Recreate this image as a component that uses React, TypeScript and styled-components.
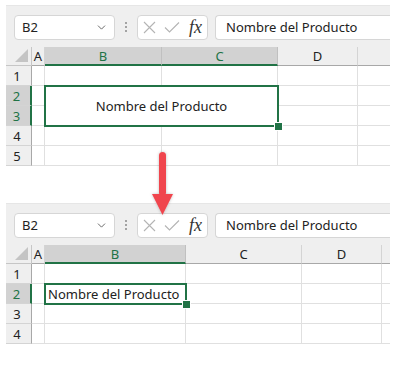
import React from "react";
import styled, { createGlobalStyle } from "styled-components";
import { ChevronDown } from "lucide-react";

const GREEN = "#217346";

const GlobalStyle = createGlobalStyle`
  html, body {
    margin: 0;
    padding: 0;
    background: #fff;
  }
  * {
    box-sizing: border-box;
  }
`;

const StyledPage = styled.div`
  position: relative;
  width: 395px;
  height: 370px;
  padding: 5px 0 0 6px;
  font-family: "Noto Sans", "Open Sans", sans-serif;
  overflow: hidden;
`;

const StyledShot = styled.section`
  width: 384px;
  overflow: hidden;
`;

const StyledSpacer = styled.div`
  height: 37px;
`;

const StyledToolbar = styled.div`
  display: flex;
  align-items: center;
  height: 42px;
  padding: 1px 0 0 8px;
  background-color: #efefef;
  border-top: 1px solid #e6e6e6;
`;

const StyledNameBox = styled.div`
  flex: none;
  display: flex;
  align-items: center;
  justify-content: space-between;
  width: 101px;
  height: 25px;
  padding: 0 6px 0 7px;
  background: #fff;
  border: 1px solid #d6d6d6;
  border-radius: 4px;
  font-size: 13px;
  color: #222;
`;

const StyledDots = styled.div`
  flex: none;
  width: 22px;
  display: flex;
  flex-direction: column;
  align-items: center;
  gap: 2px;
  & > span {
    width: 2px;
    height: 2px;
    border-radius: 1px;
    background: #8a8a8a;
  }
`;

const StyledFxBox = styled.div`
  flex: none;
  display: flex;
  align-items: center;
  width: 71px;
  height: 25px;
  padding: 0 4px 0 5px;
  background: #fff;
  border: 1px solid #d6d6d6;
  border-radius: 4px;
  gap: 8px;
`;

const StyledFx = styled.span`
  font-family: "Liberation Serif", "DejaVu Serif", serif;
  font-style: italic;
  font-size: 18px;
  color: #333;
  margin-left: 1px;
`;

const StyledFormula = styled.div`
  flex: none;
  display: flex;
  align-items: center;
  width: 200px;
  height: 25px;
  margin-left: 7px;
  padding-left: 10px;
  background: #fff;
  border: 1px solid #d6d6d6;
  border-right: none;
  border-radius: 4px 0 0 4px;
  font-size: 13px;
  color: #222;
  white-space: nowrap;
`;

const StyledGrid = styled.div<{ $cols: string; $rows: number }>`
  display: grid;
  grid-template-columns: ${(p) => p.$cols};
  grid-template-rows: 19px repeat(${(p) => p.$rows}, 20px);
  font-size: 13px;
  color: #222;
`;

const StyledCorner = styled.div`
  position: relative;
  background: #efefef;
  border-right: 1px solid #c6c6c6;
  border-bottom: 1px solid #c6c6c6;
  &::after {
    content: "";
    position: absolute;
    right: 3px;
    bottom: 3px;
    width: 0;
    height: 0;
    border-left: 13px solid transparent;
    border-bottom: 13px solid #c4c4c4;
  }
`;

const StyledColHead = styled.div<{ $active?: boolean }>`
  display: flex;
  align-items: center;
  justify-content: center;
  background: ${(p) => (p.$active ? "#d2d2d2" : "#efefef")};
  color: ${(p) => (p.$active ? GREEN : "#222")};
  border-right: 1px solid ${(p) => (p.$active ? "#c0c0c0" : "#d4d4d4")};
  border-bottom: ${(p) => (p.$active ? `2px solid ${GREEN}` : "1px solid #a8a8a8")};
  overflow: hidden;
`;

const StyledRowHead = styled.div<{ $active?: boolean }>`
  display: flex;
  align-items: center;
  justify-content: center;
  padding-right: 3px;
  background: ${(p) => (p.$active ? "#d2d2d2" : "#efefef")};
  color: ${(p) => (p.$active ? GREEN : "#222")};
  border-right: ${(p) => (p.$active ? `2px solid ${GREEN}` : "1px solid #a8a8a8")};
  border-bottom: 1px solid #d4d4d4;
`;

const StyledCell = styled.div`
  border-right: 1px solid #e0e0e0;
  border-bottom: 1px solid #e0e0e0;
`;

const StyledSelected = styled.div<{ $colSpan: number; $rowSpan: number; $center?: boolean }>`
  position: relative;
  z-index: 1;
  grid-column: span ${(p) => p.$colSpan};
  grid-row: span ${(p) => p.$rowSpan};
  display: flex;
  align-items: center;
  justify-content: ${(p) => (p.$center ? "center" : "flex-start")};
  padding-left: ${(p) => (p.$center ? "0" : "3px")};
  outline: 2px solid ${GREEN};
  outline-offset: -1px;
  white-space: nowrap;
  background: #fff;
  &::after {
    content: "";
    position: absolute;
    right: -5px;
    bottom: -5px;
    width: 7px;
    height: 7px;
    background: ${GREEN};
    border: 1px solid #fff;
  }
`;

const StyledArrow = styled.svg`
  position: absolute;
  left: 149px;
  top: 148px;
  z-index: 5;
  overflow: visible;
`;

// the last column is cut off at the picture's edge, so it shows no letter
const LETTERS = ["A", "B", "C", "D", ""];

type SheetProps = {
  widths: number[];
  rows: number;
  selCols: string[];
  selRows: number[];
  span: [number, number];
  center?: boolean;
};

const Toolbar = () => (
  <StyledToolbar>
    <StyledNameBox>
      <span>B2</span>
      <ChevronDown size={13} color="#555" strokeWidth={1.6} />
    </StyledNameBox>
    <StyledDots>
      <span />
      <span />
      <span />
    </StyledDots>
    <StyledFxBox>
      <svg width="13" height="13" viewBox="0 0 13 13">
        <path d="M1 1 L12 12 M12 1 L1 12" stroke="#b4b4b4" strokeWidth="1.1" fill="none" />
      </svg>
      <svg width="16" height="13" viewBox="0 0 16 13">
        <path d="M1 6.5 L5.5 11 L15 1.5" stroke="#b4b4b4" strokeWidth="1.1" fill="none" />
      </svg>
      <StyledFx>fx</StyledFx>
    </StyledFxBox>
    <StyledFormula>Nombre del Producto</StyledFormula>
  </StyledToolbar>
);

const Sheet = ({ widths, rows, selCols, selRows, span, center }: SheetProps) => {
  const cols = "26px " + widths.map((w) => `${w}px`).join(" ");
  const cells: React.ReactNode[] = [];

  cells.push(<StyledCorner key="corner" />);
  widths.forEach((_, i) => {
    const l = LETTERS[i];
    cells.push(
      <StyledColHead key={"h" + i} $active={l !== "" && selCols.includes(l)}>
        {l}
      </StyledColHead>
    );
  });

  for (let r = 1; r <= rows; r++) {
    cells.push(
      <StyledRowHead key={"r" + r} $active={selRows.includes(r)}>
        {r}
      </StyledRowHead>
    );
    for (let c = 0; c < widths.length; c++) {
      const insideSel = r >= 2 && r < 2 + span[1] && c >= 1 && c < 1 + span[0];
      if (r === 2 && c === 1) {
        cells.push(
          <StyledSelected key="sel" $colSpan={span[0]} $rowSpan={span[1]} $center={center}>
            Nombre del Producto
          </StyledSelected>
        );
      } else if (!insideSel) {
        cells.push(<StyledCell key={`c${r}-${c}`} />);
      }
    }
  }

  return (
    <StyledGrid $cols={cols} $rows={rows}>
      {cells}
    </StyledGrid>
  );
};

export default function App() {
  return (
    <>
      <GlobalStyle />
      <StyledPage>
        <StyledShot>
          <Toolbar />
          <Sheet
            widths={[13, 117, 116, 80, 40]}
            rows={5}
            selCols={["B", "C"]}
            selRows={[2, 3]}
            span={[2, 2]}
            center
          />
        </StyledShot>
        <StyledSpacer />
        <StyledShot>
          <Toolbar />
          <Sheet
            widths={[13, 141, 116, 80, 20]}
            rows={4}
            selCols={["B"]}
            selRows={[2]}
            span={[1, 1]}
          />
        </StyledShot>
        <StyledArrow width="26" height="70" viewBox="0 0 26 70">
          <defs>
            <filter id="sh" x="-50%" y="-20%" width="200%" height="140%">
              <feDropShadow dx="0" dy="0" stdDeviation="1.5" floodColor="#000" floodOpacity="0.25" />
            </filter>
          </defs>
          <g filter="url(#sh)">
            <rect x="10" y="4" width="7" height="44" rx="3.5" fill="#f0454d" />
            <path d="M3 46 L24 46 L13.5 67 Z" fill="#f0454d" />
          </g>
        </StyledArrow>
      </StyledPage>
    </>
  );
}
